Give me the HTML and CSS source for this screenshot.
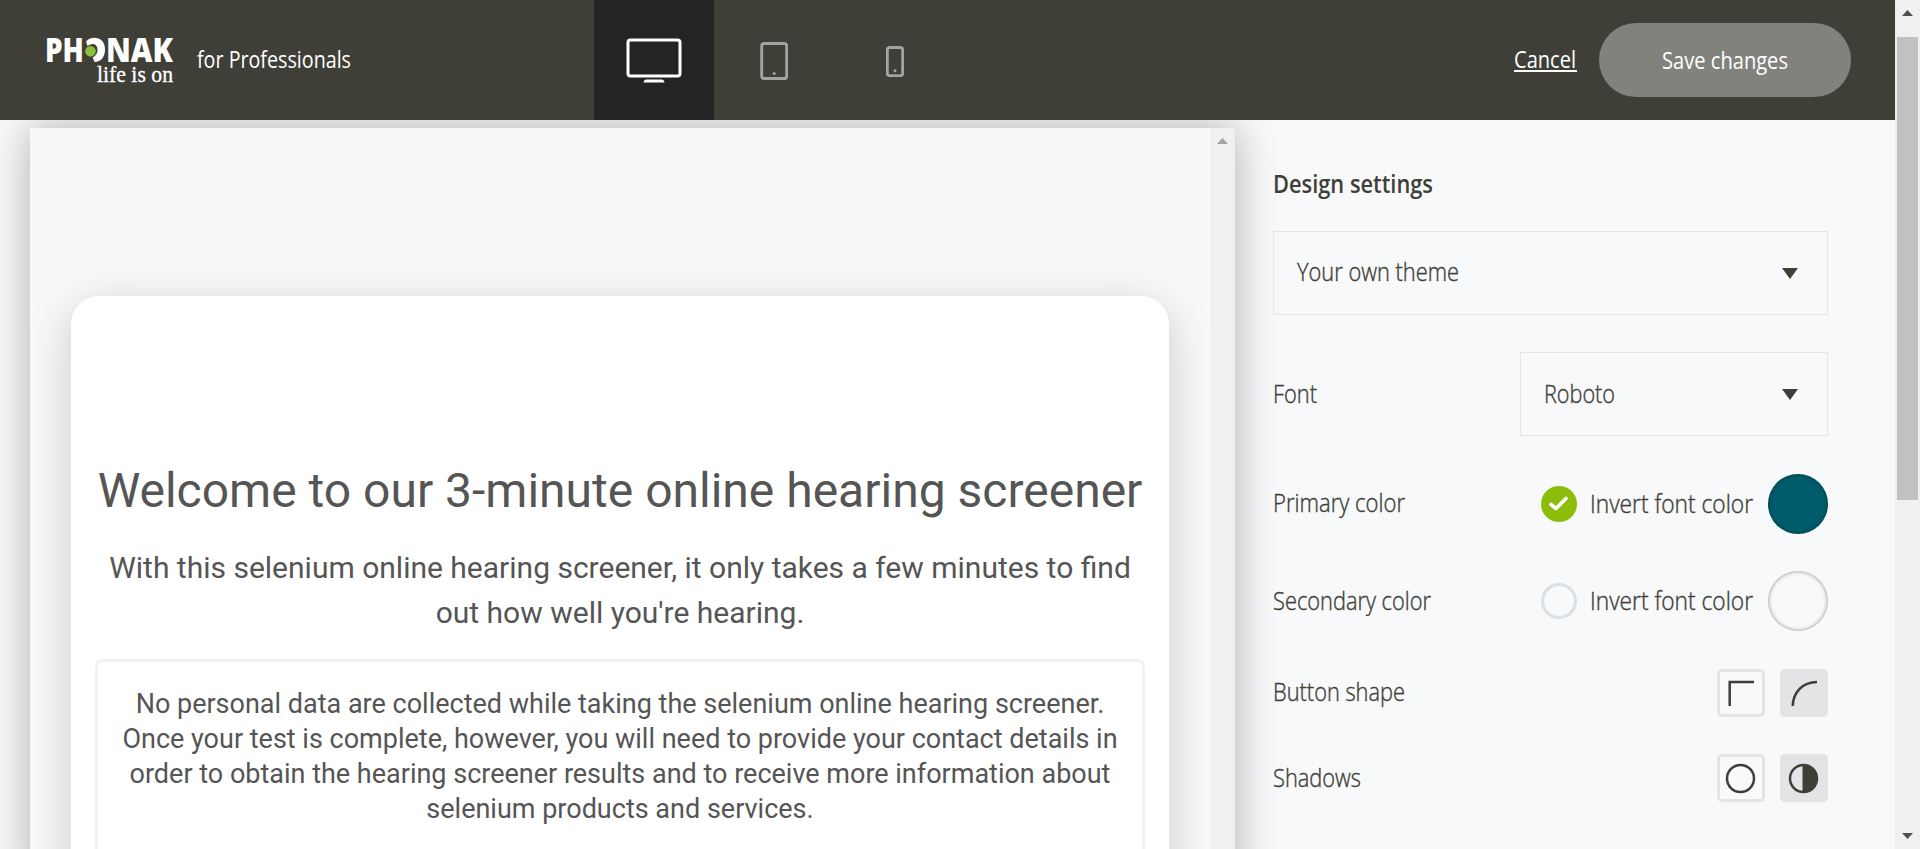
FILE: index.html
```html
<!DOCTYPE html>
<html lang="en">
<head>
<meta charset="utf-8">
<title>Design settings</title>
<link rel="stylesheet" href="styles.css">
</head>
<body>
<div class="window">
  <div class="page">
    <header class="header">
      <div class="brand">
        <svg class="logo" width="127" height="48" viewBox="0 0 127 48">
          <g class="logo-name">
            <text x="-1" y="25" textLength="39" lengthAdjust="spacingAndGlyphs">PH</text>
            <text x="60" y="25" textLength="67" lengthAdjust="spacingAndGlyphs">NAK</text>
          </g>
          <path class="logo-o" d="M40 4.500C44-1 59-2 59 12.500C59 20 55 25 48.500 25L46.800 20.500C50 19 51.500 16 51.500 13C51.500 7 47 5 41.500 9Z"/>
          <circle class="logo-dot" cx="44.500" cy="14.300" r="5.300"/>
          <text class="logo-tagline" x="51" y="45" textLength="76" lengthAdjust="spacingAndGlyphs">life is on</text>
        </svg>
        <svg class="label light" width="154" height="32"><text x="0" y="24" textLength="154" lengthAdjust="spacingAndGlyphs">for Professionals</text></svg>
      </div>
      <nav class="devices">
        <button class="device active" aria-label="Desktop">
          <svg width="56" height="46" viewBox="0 0 56 46"><rect x="2" y="2" width="52" height="36" rx="2.500"/><path class="solid" d="M17.500 44.500Q18 41.500 20.500 41.500H35.500Q38 41.500 38.500 44.500Z"/></svg>
        </button>
        <button class="device" aria-label="Tablet">
          <svg width="28" height="38" viewBox="0 0 28 38"><rect x="1.700" y="1.500" width="25" height="35" rx="2.500"/><circle class="solid" cx="14.200" cy="31.500" r="1.500"/></svg>
        </button>
        <button class="device" aria-label="Phone">
          <svg width="18" height="31" viewBox="0 0 18 31"><rect x="1.300" y="1.500" width="15.400" height="28.200" rx="2.500"/><circle class="solid" cx="9" cy="24.700" r="1.500"/></svg>
        </button>
      </nav>
      <div class="actions">
        <a class="cancel"><svg class="label light" width="63" height="32"><text x="0" y="24" textLength="62" lengthAdjust="spacingAndGlyphs">Cancel</text></svg></a>
        <button class="save"><svg class="label light" width="126" height="32"><text x="0" y="25" textLength="126" lengthAdjust="spacingAndGlyphs">Save changes</text></svg></button>
      </div>
    </header>
    <main class="main">
      <section class="preview">
        <div class="preview-content">
          <article class="card">
            <h1>Welcome to our 3-minute online hearing screener</h1>
            <p class="intro">With this selenium online hearing screener, it only takes a few minutes to find<br>out how well you're hearing.</p>
            <p class="notice">No personal data are collected while taking the selenium online hearing screener.<br>Once your test is complete, however, you will need to provide your contact details in<br>order to obtain the hearing screener results and to receive more information about<br>selenium products and services.</p>
          </article>
        </div>
        <div class="preview-scroll"><svg width="11" height="6" viewBox="0 0 11 6"><path d="M5.500 0L11 6H0Z"/></svg></div>
      </section>
      <aside class="settings">
        <svg class="label heading" width="160" height="32"><text x="0" y="25" textLength="160" lengthAdjust="spacingAndGlyphs">Design settings</text></svg>
        <div class="select theme">
          <svg class="label" width="162" height="32"><text x="0" y="24" textLength="162" lengthAdjust="spacingAndGlyphs">Your own theme</text></svg>
          <svg class="caret" width="16" height="11" viewBox="0 0 16 11"><path d="M0 0H16L8 11Z"/></svg>
        </div>
        <div class="row font-row">
          <svg class="label" width="44" height="32"><text x="0" y="25" textLength="44" lengthAdjust="spacingAndGlyphs">Font</text></svg>
          <div class="select font">
            <svg class="label" width="70" height="32"><text x="0" y="25" textLength="71" lengthAdjust="spacingAndGlyphs">Roboto</text></svg>
            <svg class="caret" width="16" height="11" viewBox="0 0 16 11"><path d="M0 0H16L8 11Z"/></svg>
          </div>
        </div>
        <div class="row primary-row">
          <svg class="label" width="132" height="32"><text x="0" y="24" textLength="132" lengthAdjust="spacingAndGlyphs">Primary color</text></svg>
          <div class="color-control">
            <svg class="check" width="36" height="36" viewBox="0 0 36 36"><circle class="check-on" cx="18" cy="18" r="18"/><path class="tick" d="M10 18.500L15 22.500L25 12.500"/></svg>
            <svg class="label" width="162" height="32"><text x="-1" y="25" textLength="163" lengthAdjust="spacingAndGlyphs">Invert font color</text></svg>
            <span class="swatch teal"></span>
          </div>
        </div>
        <div class="row secondary-row">
          <svg class="label" width="158" height="32"><text x="0" y="25" textLength="158" lengthAdjust="spacingAndGlyphs">Secondary color</text></svg>
          <div class="color-control">
            <svg class="check" width="36" height="36" viewBox="0 0 36 36"><circle class="check-off" cx="18" cy="18" r="16.500"/></svg>
            <svg class="label" width="162" height="32"><text x="-1" y="25" textLength="163" lengthAdjust="spacingAndGlyphs">Invert font color</text></svg>
            <span class="swatch pale"></span>
          </div>
        </div>
        <div class="row shape-row">
          <svg class="label" width="132" height="32"><text x="0" y="24" textLength="132" lengthAdjust="spacingAndGlyphs">Button shape</text></svg>
          <div class="options">
            <button class="option" aria-label="Square"><svg width="48" height="48"><path d="M12.700 37V13H37"/></svg></button>
            <button class="option chosen" aria-label="Round"><svg width="48" height="48"><path d="M12.700 37C13 24 22 13 37 13"/></svg></button>
          </div>
        </div>
        <div class="row shadow-row">
          <svg class="label" width="88" height="32"><text x="0" y="25" textLength="88" lengthAdjust="spacingAndGlyphs">Shadows</text></svg>
          <div class="options">
            <button class="option" aria-label="Flat"><svg width="48" height="48"><circle cx="23.500" cy="24.500" r="13.500"/></svg></button>
            <button class="option chosen" aria-label="Shadow"><svg width="48" height="48"><circle cx="23.500" cy="24.500" r="13.500"/><path class="half" d="M22.500 11H23.500A13.500 13.500 0 0 1 23.500 38H22.500Z"/></svg></button>
          </div>
        </div>
      </aside>
    </main>
  </div>
  <div class="scrollbar">
    <svg width="11" height="6" viewBox="0 0 11 6"><path d="M5.500 0L11 6H0Z"/></svg>
    <div class="thumb"></div>
    <svg class="down" width="11" height="6" viewBox="0 0 11 6"><path d="M0 0H11L5.500 6Z"/></svg>
  </div>
</div>
</body>
</html>
```
FILE: styles.css
```css
* { box-sizing: border-box; }
body { margin: 0; overflow: hidden; font-family: Roboto, sans-serif; }
button { border: 0; padding: 0; background: none; }
svg { display: block; flex: none; }
h1, p { margin: 0; }

.window { display: flex; width: 1920px; height: 849px; background: #f8f9fb; overflow: hidden; }
.page { display: flex; flex-direction: column; width: 1895px; }

.label { overflow: visible; fill: #403f37; font: 400 25px "Open Sans", sans-serif; }
.settings .label:not(.heading) { font-weight: 300; stroke: #403f37; stroke-width: .4; }
.label.light { fill: #fff; font-size: 23px; }
.label.heading { font-size: 26px; font-weight: 600; }

.header { display: flex; height: 120px; background: #403f37; position: relative; z-index: 1; }
.brand { display: flex; gap: 24px; width: 594px; padding: 37px 0 0 46px; }
.brand .label { margin-top: 7px; }
.logo { overflow: visible; fill: #fff; }
.logo-name { font: 800 33px "Open Sans", sans-serif; }
.logo-dot { fill: #8bbf3c; }
.logo-tagline { font: 23px "Liberation Serif", serif; stroke: #fff; stroke-width: .3; }
.devices { display: flex; }
.device { display: flex; justify-content: center; align-items: center; width: 120px; height: 120px; fill: none; stroke: #a3a39f; stroke-width: 2.900; }
.device.active { background: #242424; stroke: #fff; stroke-width: 3; }
.device svg { margin-top: 2px; }
.device:last-child svg { margin-top: 3px; margin-left: 2px; }
.device .solid { fill: #a3a39f; stroke: none; }
.device.active .solid { fill: #fff; }
.actions { display: flex; align-items: center; gap: 22px; margin-left: auto; padding-right: 44px; }
.cancel { border-bottom: 2px solid #fff; height: 28px; margin-top: -4px; padding-bottom: 2px; }
.save { display: flex; justify-content: center; align-items: center; width: 252px; height: 74px; border-radius: 37px; background: #82827c; }

.main { display: flex; flex: 1; padding: 8px 67px 0 30px; }
.preview { display: flex; width: 1205px; height: 760px; background: #f7f8fa; box-shadow: 0 0 40px rgba(0, 0, 0, .3); }
.preview-content { width: 1180px; height: 721px; padding: 168px 41px 0; overflow: hidden; }
.preview-scroll { display: flex; justify-content: center; width: 25px; padding-top: 10px; background: #f0f0f0; fill: #a3a3a3; }
.card { width: 1098px; height: 800px; padding: 166px 24px 0; border-radius: 28px; background: #fff; box-shadow: 0 12px 45px rgba(0, 0, 0, .19); color: #555; text-align: center; white-space: nowrap; }
h1 { display: flex; justify-content: center; font-size: 48px; font-weight: 400; line-height: 58px; }
.intro { margin-top: 25px; font-size: 30px; line-height: 45px; }
.notice { height: 400px; margin-top: 24px; padding-top: 25px; border: 3px solid #f2f2f2; border-radius: 7px; font-size: 27px; line-height: 35px; }

.settings { display: flex; flex-direction: column; margin-left: 38px; width: 555px; padding-top: 40px; }
.select { display: flex; justify-content: space-between; align-items: center; height: 84px; padding: 0 29px 0 23px; border: 1px solid #e3e5e7; }
.caret { fill: #403f37; }
.theme { margin-top: 31px; }
.row { display: flex; justify-content: space-between; align-items: center; }
.font-row { margin-top: 37px; }
.font { width: 308px; }
.primary-row { margin-top: 38px; height: 60px; }
.secondary-row { margin-top: 37px; height: 60px; }
.color-control { display: flex; align-items: center; }
.check { margin-right: 14px; fill: none; }
.check-on { fill: #8bbd0a; }
.check-off { stroke: #dae0e4; stroke-width: 3; }
.tick { stroke: #fff; stroke-width: 3.600; stroke-linecap: round; stroke-linejoin: round; }
.swatch { width: 60px; height: 60px; margin-left: 15px; border-radius: 50%; box-shadow: inset 0 0 4px rgba(0, 0, 0, .35); }
.teal { background: #005b6a; }
.pale { background: #f8f9fb; box-shadow: inset 0 0 4px rgba(0, 0, 0, .45); }
.shape-row { margin-top: 38px; height: 48px; }
.shadow-row { margin-top: 37px; height: 48px; }
.options { display: flex; gap: 15px; }
.option { width: 48px; height: 48px; border-radius: 5px; box-shadow: inset 0 0 0 3px #e2e4e6; fill: none; stroke: #403f37; stroke-width: 2.500; }
.option.chosen { background: #e2e4e6; }
.half { fill: #403f37; stroke: none; }

.scrollbar { display: flex; flex-direction: column; align-items: center; width: 25px; padding: 10px 0 10px; background: #f0f0f0; fill: #505050; }
.thumb { width: 21px; height: 463px; margin-top: 21px; background: #c1c1c1; }
.down { margin-top: auto; }
```
